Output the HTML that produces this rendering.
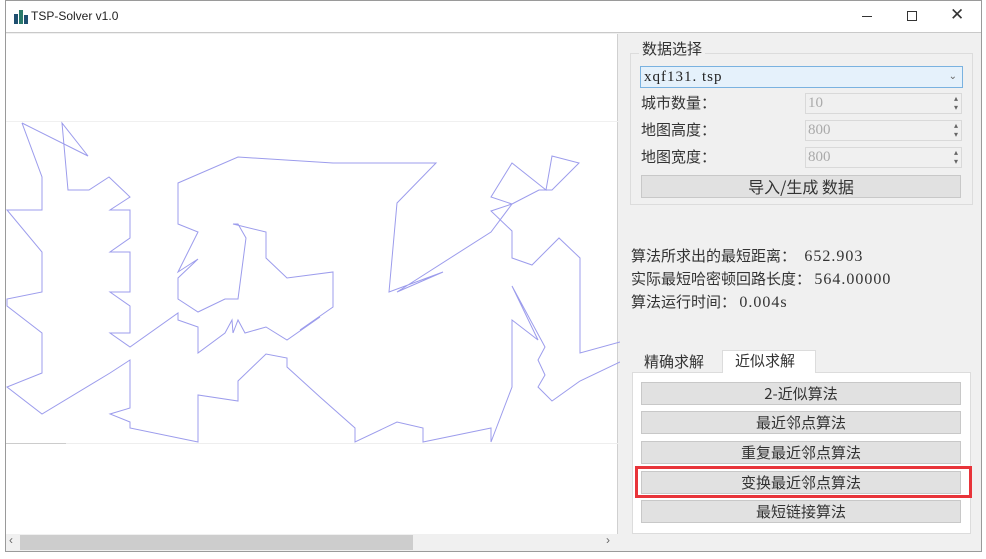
<!DOCTYPE html>
<html><head><meta charset="utf-8"><style>
*{margin:0;padding:0;box-sizing:border-box}
body{width:986px;height:559px;background:#fff;position:relative;overflow:hidden;font-family:"Liberation Sans","Noto Sans CJK SC",sans-serif;}
.a{position:absolute}
.cjk{font-family:"Noto Sans CJK SC","Liberation Sans",sans-serif;color:#333;font-size:15px}
.mono{font-family:"Liberation Serif","Noto Serif CJK SC",serif;font-size:16px;letter-spacing:1px}
.btn{position:absolute;left:641px;width:320px;height:23px;background:#e1e1e1;border:1px solid #c8c8c8;text-align:center;line-height:21px;font-size:15px;color:#333;font-family:"Noto Sans CJK SC",sans-serif}
.spin{position:absolute;left:805px;width:157px;height:21px;border:1px solid #d9d9d9;background:#f0f0f0;color:#aaa;font-size:15px;line-height:19px;padding-left:2px;font-family:"Liberation Serif",serif}
.spin:after{content:"▴\A▾";white-space:pre;position:absolute;right:3px;top:0;font-size:8px;line-height:9px;color:#666}
</style></head><body>
<div class="a" style="left:5px;top:0;width:977px;height:552px;border:1px solid #9a9a9a;background:#f0f0f0"></div>
<div class="a" style="left:6px;top:1px;width:975px;height:32px;background:#fff;border-bottom:1px solid #c9c9c9"></div>
<svg class="a" style="left:13px;top:9px" width="16" height="16"><rect x="1" y="5" width="4" height="10" fill="#1f4f70"/><rect x="6" y="1" width="4" height="14" fill="#2a7a6a"/><rect x="11" y="6" width="4" height="9" fill="#1f4f70"/></svg>
<div class="a" style="left:31px;top:9px;font-size:12px;color:#222">TSP-Solver v1.0</div>
<div class="a" style="left:862px;top:16px;width:10px;height:1px;background:#333"></div>
<div class="a" style="left:907px;top:11px;width:10px;height:10px;border:1px solid #333"></div>
<div class="a" style="left:950px;top:5px;font-size:17px;color:#333;font-weight:300">✕</div>
<div class="a" style="left:6px;top:34px;width:612px;height:517px;background:#fff;border-right:1px solid #d0d0d0"></div>
<div class="a" style="left:6px;top:121px;width:612px;height:1px;background:#f0f0f0"></div>
<div class="a" style="left:6px;top:443px;width:612px;height:1px;background:#eee"></div>
<div class="a" style="left:6px;top:443px;width:60px;height:1px;background:#ccc"></div>
<svg class="a" style="left:0;top:0" width="620" height="540"><g fill="none" stroke="#9c9cec" stroke-width="1">
<polyline points="22,123 42,177 42,210 7,210 42,252 42,292 7,299 7,306 42,333 42,373 7,387 42,414 110,373 130,360 130,408 110,414 130,422 130,428 198,442 198,395 238,401 238,381 266,354 287,358 287,367 320,397 355,428 355,442 397,422 423,428 423,442 491,428 491,442 512,387 512,320 538,340 512,286 545,347 538,360 545,375 538,387 552,401 580,381 620,362"/>
<polyline points="620,342 580,353 580,258 559,238 532,265 512,258 512,231 491,211 512,204 539,190 552,190 579,163 552,156 546,190 512,163 491,197 512,204 491,232 397,292 443,272 389,292 397,203 436,163 333,163 238,157 178,183 178,224 198,232 178,272 198,259 178,278 178,299 198,312 225,299 238,299 246,238 238,224 233,224 266,232 266,258 287,278 333,272 333,307 300,330 320,317 287,340 266,327 245,333 238,320 233,333 232,320 225,333 198,353 198,327 178,320 178,313 130,347 110,333 130,333 130,306 110,292 130,292 130,252 110,252 130,238 130,210 110,210 130,197 109,177 89,190 68,190 62,123 88,156 22,123"/>
</g></svg>
<div class="a" style="left:6px;top:534px;width:612px;height:17px;background:#f0f0f0"></div>
<div class="a" style="left:20px;top:535px;width:393px;height:15px;background:#cdcdcd"></div>
<div class="a" style="left:9px;top:533px;font-size:12px;color:#666">‹</div>
<div class="a" style="left:606px;top:533px;font-size:12px;color:#666">›</div>
<div class="a" style="left:630px;top:53px;width:343px;height:152px;border:1px solid #dcdcdc"></div>
<div class="a cjk" style="left:639px;top:39px;background:#f0f0f0;padding:0 3px;font-size:15px;line-height:20px">数据选择</div>
<div class="a mono" style="left:640px;top:66px;width:323px;height:22px;border:1px solid #7ab2e0;background:#e5f1fb;font-size:15px;line-height:20px;padding-left:3px;color:#222">xqf131. tsp<span style="position:absolute;right:4px;font-size:10px;color:#666">⌄</span></div>
<div class="a cjk" style="left:641px;top:93px;line-height:20px">城市数量：</div>
<div class="a cjk" style="left:641px;top:120px;line-height:20px">地图高度：</div>
<div class="a cjk" style="left:641px;top:147px;line-height:20px">地图宽度：</div>
<div class="spin" style="top:93px">10</div>
<div class="spin" style="top:120px">800</div>
<div class="spin" style="top:147px">800</div>
<div class="btn" style="top:175px;height:23px;font-size:16px">导入/生成 数据</div>
<div class="a cjk" style="left:631px;top:246px;line-height:20px">算法所求出的最短距离： <span class="mono">&nbsp;652.903</span></div>
<div class="a cjk" style="left:631px;top:269px;line-height:20px">实际最短哈密顿回路长度： <span class="mono">564.00000</span></div>
<div class="a cjk" style="left:631px;top:292px;line-height:20px">算法运行时间： <span class="mono">0.004s</span></div>
<div class="a" style="left:632px;top:372px;width:339px;height:162px;background:#fff;border:1px solid #dcdcdc"></div>
<div class="a cjk" style="left:644px;top:352px;line-height:20px">精确求解</div>
<div class="a cjk" style="left:722px;top:350px;width:94px;height:23px;background:#fff;border:1px solid #dcdcdc;border-bottom:none;line-height:20px;padding-left:12px">近似求解</div>
<div class="btn" style="top:382px">2-近似算法</div>
<div class="btn" style="top:411px">最近邻点算法</div>
<div class="btn" style="top:441px">重复最近邻点算法</div>
<div class="btn" style="top:471px">变换最近邻点算法</div>
<div class="btn" style="top:500px">最短链接算法</div>
<div class="a" style="left:635px;top:466px;width:337px;height:32px;border:3px solid #e8343a"></div>
</body></html>
